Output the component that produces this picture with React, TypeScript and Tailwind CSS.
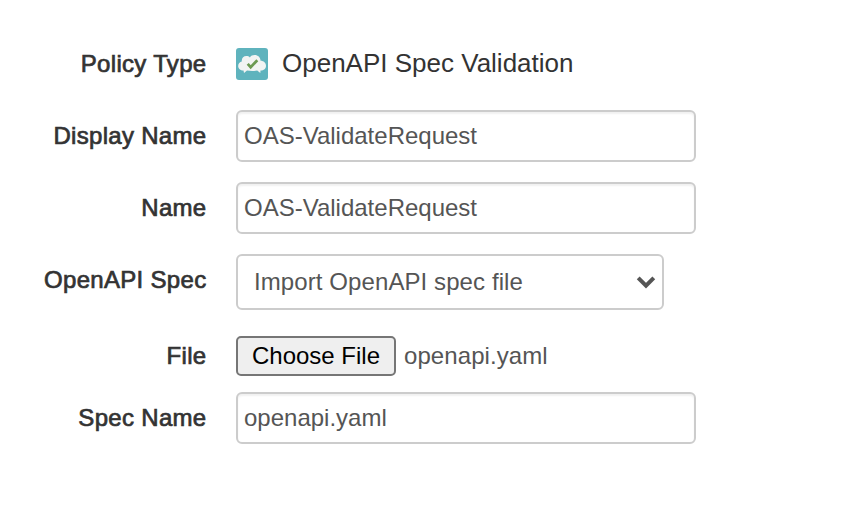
import React from 'react';

function Row({ name, className, raised = false, children }: { name: string; className: string; raised?: boolean; children: React.ReactNode }) {
  return (
    <div className={`flex items-center gap-[29.5px] ${className}`}>
      <div className={`w-[206.5px] shrink-0 text-right leading-[28px] font-medium tracking-[0.31px] whitespace-nowrap text-[#333] [-webkit-text-stroke:0.7px_#333] ${raised ? 'pb-[4px]' : ''}`}>
        {name}
      </div>
      {children}
    </div>
  );
}

function TextField({ value }: { value: string }) {
  return (
    <div className="flex h-[52px] w-[460px] items-center rounded-[6px] border-2 border-[#ccc] bg-white px-[6px] text-[#555] shadow-[inset_0_2px_2px_rgba(0,0,0,0.06)]">
      {value}
    </div>
  );
}

export default function App() {
  return (
    <div className="flex h-[508px] w-[868px] flex-col overflow-hidden bg-white pt-[36px] font-['Liberation_Sans',Arial,sans-serif] text-[24px]">
      <Row name="Policy Type" className="h-[56px]">
        <div className="flex items-center gap-[14px]">
          <svg width="32" height="32" viewBox="0 0 32 32">
            <rect width="32" height="32" rx="3" fill="#5fb3bd" />
            <path d="M8 25 7.500 22.500C4.200 22.500 2.200 20.400 2.200 17.900c0-2.400 1.600-4 3.600-4.400C5.400 10 7.500 8 10.400 8c1.400 0 2.600.5 3.500 1.400C14.900 7.800 16.500 7 18.600 7c3.500 0 5.800 2.400 6 5.800 3.200 0 5.400 2.200 5.400 4.900 0 2.800-2 4.800-5.500 4.800L24.300 25 21.200 22.600Q16 23.400 11 22.600Z" fill="#f2f4f3" />
            <path d="m11.700 15.800 3 3.400 6.600-7" fill="none" stroke="#6c9a52" strokeWidth="2.700" />
          </svg>
          <span className="pb-[2px] text-[26px] text-[#333]">OpenAPI Spec Validation</span>
        </div>
      </Row>
      <Row name="Display Name" className="mt-[18px] h-[52px]"><TextField value="OAS-ValidateRequest" /></Row>
      <Row name="Name" className="mt-[20px] h-[52px]"><TextField value="OAS-ValidateRequest" /></Row>
      <Row name="OpenAPI Spec" raised className="mt-[20px] h-[56px]">
        <div className="flex h-[56px] w-[428px] items-center justify-between rounded-[6px] border-2 border-[#ccc] pr-[6px] pl-[16px] tracking-[0.09px] text-[#555]">
          Import OpenAPI spec file
          <svg width="20" height="14" viewBox="0 0 20 14"><path d="m2.200 2.800 7.800 7.800 7.800-7.800" fill="none" stroke="#555" strokeWidth="4" /></svg>
        </div>
      </Row>
      <Row name="File" className="mt-[26px] h-[40px]">
        <div className="flex items-center gap-[8px]">
          <div className="flex h-[40px] w-[160px] items-center justify-center rounded-[5px] border-2 border-[#767676] bg-[#efefef] text-black">Choose File</div>
          <span className="tracking-[0.08px] text-[#555]">openapi.yaml</span>
        </div>
      </Row>
      <Row name="Spec Name" className="mt-[16px] h-[52px]"><TextField value="openapi.yaml" /></Row>
    </div>
  );
}
